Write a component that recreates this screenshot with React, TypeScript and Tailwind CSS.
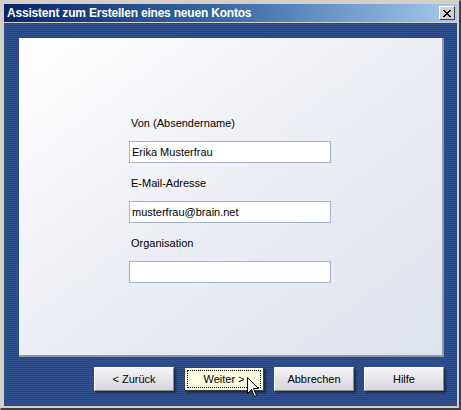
import React from "react";

const font = { fontFamily: '"Liberation Sans", Tahoma, Arial, sans-serif' };

const Field = ({ label, value }: { label: string; value: string }) => (
  <div className="flex flex-col">
    <div className="mb-[8px] h-[20px] pl-[2px] text-[11px] leading-[20px] text-black">{label}</div>
    <div className="h-[22px] w-[202px] border border-[#a5b3cc] bg-white px-[2px] text-[11px] leading-[20px] text-black">
      {value}
    </div>
  </div>
);

const Btn = ({ children, focus }: { children: React.ReactNode; focus?: boolean }) => (
  <div
    className={
      "flex h-[24px] w-[80px] items-center justify-center text-[11px] text-black shadow-[2px_2px_2px_rgba(0,0,0,0.45)] " +
      (focus
        ? "border border-[#404040] bg-[#ffffe1] p-[2px]"
        : "border border-t-[#ffffff] border-l-[#ffffff] border-r-[#8a8a8a] border-b-[#8a8a8a] bg-gradient-to-b from-[#f4f4f6] to-[#d7d7dc]")
    }
  >
    {focus ? (
      <div className="flex h-full w-full items-center justify-center border border-dotted border-black">{children}</div>
    ) : (
      children
    )}
  </div>
);

export default function App() {
  return (
    <div className="relative h-[410px] w-[461px] overflow-hidden" style={font}>
      <div className="flex h-full w-full flex-col border-t border-l border-r-2 border-b-2 border-t-[#d4d0c8] border-l-[#d4d0c8] border-r-[#404040] border-b-[#404040] bg-[#d4d0c8] p-[3px] pb-[2px] pr-[2px]">
        <div className="flex h-[18px] items-center justify-between bg-gradient-to-r from-[#0a246a] via-[#3a6ea5] to-[#a6caf0] pl-[3px] pr-[2px]">
          <span className="text-[12px] font-bold tracking-[-0.2px] text-white">Assistent zum Erstellen eines neuen Kontos</span>
          <div className="flex h-[14px] w-[16px] items-center justify-center border border-t-white border-l-white border-r-[#404040] border-b-[#404040] bg-[#d4d0c8]">
            <svg width="8" height="7" viewBox="0 0 8 7">
              <path d="M0 0h2v1h-2zM6 0h2v1h-2zM1 1h2v1h-2zM5 1h2v1h-2zM2 2h4v1h-4zM3 3h2v1h-2zM2 4h4v1h-4zM1 5h2v1h-2zM5 5h2v1h-2zM0 6h2v1h-2zM6 6h2v1h-2z" fill="#000" />
            </svg>
          </div>
        </div>
        <div className="mt-[1px] flex flex-1 flex-col bg-[repeating-linear-gradient(180deg,#27467f_0px,#27467f_1px,#30518d_1px,#30518d_2px)] pl-[15px] pr-[13px] pt-[15px]">
          <div className="flex h-[319px] flex-col items-start border-r-2 border-b-2 border-r-[#8f97a8] border-b-[#8f97a8] bg-gradient-to-br from-[#ffffff] via-[#eceef5] to-[#dde3ee] pl-[110px] pt-[75px]">
            <div className="flex flex-col gap-[10px]">
              <Field label="Von (Absendername)" value="Erika Musterfrau" />
              <Field label="E-Mail-Adresse" value="musterfrau@brain.net" />
              <Field label="Organisation" value="" />
            </div>
          </div>
          <div className="mt-[10px] flex justify-end gap-[10px]">
            <Btn>&lt; Zurück</Btn>
            <Btn focus>Weiter &gt;</Btn>
            <Btn>Abbrechen</Btn>
            <Btn>Hilfe</Btn>
          </div>
        </div>
      </div>
      <svg className="absolute left-[247px] top-[377px]" width="13" height="21" viewBox="0 0 13 21">
        <path d="M0.5 0.5 L0.5 16.5 L4.5 12.5 L7.5 19.5 L9.5 18.5 L6.5 11.5 L11.5 11.5 Z" fill="#fff" stroke="#000" strokeWidth="1" />
      </svg>
    </div>
  );
}
